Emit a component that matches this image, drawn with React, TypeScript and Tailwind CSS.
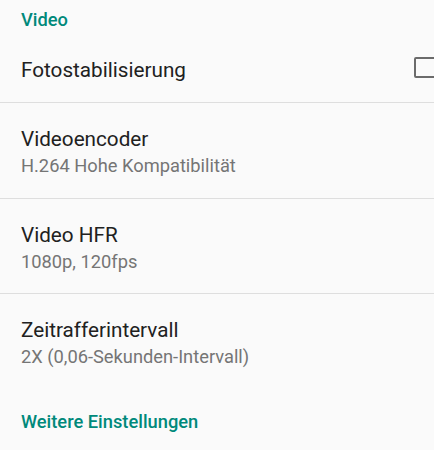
import React from 'react';

type Item = {
  title: string;
  summary: string;
  height: string;
};

const items: Item[] = [
  { title: 'Videoencoder', summary: 'H.264 Hohe Kompatibilität', height: 'h-[95px]' },
  { title: 'Video HFR', summary: '1080p, 120fps', height: 'h-[94px]' },
];

const Divider: React.FC = () => <div className="h-px w-full bg-[#dedede]" />;

const App: React.FC = () => {
  return (
    <div
      className="w-[434px] h-[450px] overflow-hidden bg-[#fafafa]"
      style={{ fontFamily: 'Roboto, "Noto Sans", sans-serif' }}
    >
      <div className="h-[40px] flex items-center pl-[21px]">
        <span className="text-[18.3px] leading-[24px] font-medium text-[#00897b]">Video</span>
      </div>

      <div className="h-[62px] flex items-center justify-between pl-[21px] pb-[3px]">
        <span className="text-[20.7px] leading-[24px] text-[#212121]">Fotostabilisierung</span>
        <div className="w-[22px] h-[21px] -mr-[2px] mt-[-5px] border-2 border-[#6b6b6b] rounded-[2px]" />
      </div>
      <Divider />

      {items.map((item) => (
        <React.Fragment key={item.title}>
          <div className={`${item.height} pl-[21px] pt-[24px]`}>
            <div className="text-[20.7px] leading-[24px] text-[#212121]">{item.title}</div>
            <div className="mt-[3px] text-[18.3px] leading-[24px] text-[#757575]">{item.summary}</div>
          </div>
          <Divider />
        </React.Fragment>
      ))}

      <div className="pl-[21px] pt-[24px]">
        <div className="text-[20.7px] leading-[24px] text-[#212121]">Zeitrafferintervall</div>
        <div className="mt-[3px] text-[18.3px] leading-[24px] text-[#757575]">2X (0,06-Sekunden-Intervall)</div>
      </div>

      <div className="mt-[41px] pl-[21px]">
        <span className="text-[18.3px] leading-[24px] font-medium text-[#00897b]">Weitere Einstellungen</span>
      </div>
    </div>
  );
};

export default App;
